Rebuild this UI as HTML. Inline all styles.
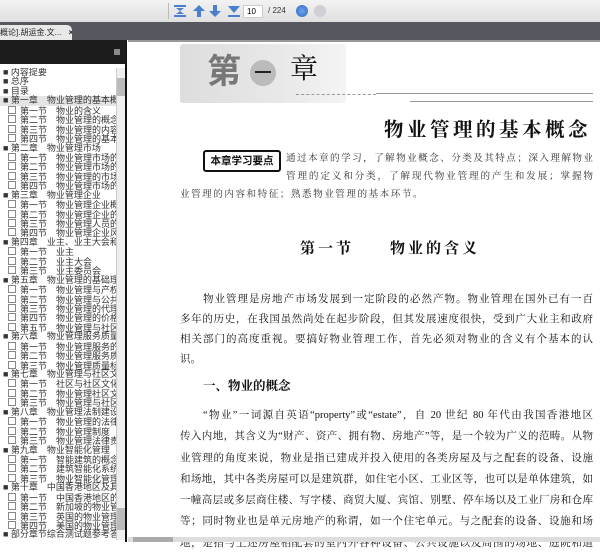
<!DOCTYPE html>
<html><head><meta charset="utf-8"><style>
*{margin:0;padding:0;box-sizing:border-box}
body{width:600px;height:542px;overflow:hidden;background:#fff;position:relative;font-family:"Liberation Serif","Noto Serif CJK SC",serif}
.abs{position:absolute}
#tb{left:0;top:0;width:600px;height:22px;background:linear-gradient(#f2f2f2,#e0e0e0)}
#tabs{left:0;top:22px;width:600px;height:18px;background:#57575f}
#tab{left:0;top:25px;width:72px;height:15px;background:#e8e8e8;border-radius:0 5px 0 0;font:8px "Liberation Sans","Noto Sans CJK SC",sans-serif;color:#222;line-height:15px;white-space:nowrap;overflow:hidden}
#lp{left:0;top:40px;width:127px;height:502px;background:#fff;border-right:2px solid #111}
#lph{left:0;top:40px;width:126px;height:24px;background:#1c1c1c}
#tree{left:0;top:68px;width:116px;font:9px "Liberation Sans","Noto Sans CJK SC",sans-serif;color:#333;line-height:9.45px;white-space:nowrap;overflow:hidden}
#tree div{height:9.45px}
.c{padding-left:3px}
.s{padding-left:8px}
.s:before{content:"";display:inline-block;width:6px;height:6px;border:1px solid #888;margin-right:4px;vertical-align:0}
#sb{left:116px;top:68px;width:9px;height:472px;background:#eee;border-left:1px solid #ccc}
.zh{font-family:"Liberation Serif","Noto Serif CJK SC",serif;color:#111}
p.t{font-size:10.5px;line-height:20px;height:20px;text-align:justify;text-align-last:justify;overflow:hidden}
</style></head><body>
<div id="tb" class="abs"></div>
<div class="abs" style="left:168px;top:3px;width:1px;height:16px;background:#bbb"></div>
<svg class="abs" style="left:172px;top:3px" width="70" height="16" viewBox="0 0 70 16">
<g fill="#4a7fd0"><rect x="2" y="2" width="12" height="2"/><rect x="2" y="12" width="12" height="2"/><path d="M4 5h8l-4 3zM4 11h8l-4-3z"/>
<path d="M27 2l-6 6h4v6h4V8h4z"/><path d="M43 14l-6-6h4V2h4v6h4z"/>
<rect x="56" y="12" width="12" height="2"/><path d="M56 3h12l-6 7z"/></g></svg>
<div class="abs" style="left:243px;top:5px;width:20px;height:13px;background:#fff;border:1px solid #ccc;font:8px 'Liberation Sans',sans-serif;padding-left:3px;line-height:11px">10</div>
<div class="abs" style="left:268px;top:6px;font:8px 'Liberation Sans',sans-serif;color:#333">/ 224</div>
<div class="abs" style="left:296px;top:5px;width:12px;height:12px;border-radius:50%;background:radial-gradient(#6fa2e8,#2f68c4)"></div>
<div class="abs" style="left:314px;top:5px;width:12px;height:12px;border-radius:50%;background:#cfcfd4"></div>
<div id="tabs" class="abs"></div>
<div id="tab" class="abs">概论].胡运金.文... <b style="margin-left:5px">×</b></div>
<div id="lp" class="abs"></div>
<div id="lph" class="abs"><div class="abs" style="left:114px;top:9px;width:6px;height:6px;background:#888"></div></div>
<div id="tree" class="abs">
<div class="c">■ 内容提要</div><div class="c">■ 总序</div><div class="c">■ 目录</div>
<div class="c" style="background:#e4e4e4">■ 第一章　物业管理的基本概念</div>
<div class="s">第一节　物业的含义</div><div class="s">第二节　物业管理的概念</div><div class="s">第三节　物业管理的内容与</div><div class="s">第四节　物业管理的基本环</div>
<div class="c">■ 第二章　物业管理市场</div>
<div class="s">第一节　物业管理市场的概</div><div class="s">第二节　物业管理市场的运</div><div class="s">第三节　物业管理的市场秩</div><div class="s">第四节　物业管理市场的完</div>
<div class="c">■ 第三章　物业管理企业</div>
<div class="s">第一节　物业管理企业概述</div><div class="s">第二节　物业管理企业的设</div><div class="s">第三节　物业管理人员的素</div><div class="s">第四节　物业管理企业风险</div>
<div class="c">■ 第四章　业主、业主大会和业主</div>
<div class="s">第一节　业主</div><div class="s">第二节　业主大会</div><div class="s">第三节　业主委员会</div>
<div class="c">■ 第五章　物业管理的基础理论</div>
<div class="s">第一节　物业管理与产权理</div><div class="s">第二节　物业管理与公共选</div><div class="s">第三节　物业管理的代理理</div><div class="s">第四节　物业管理的价格理</div><div class="s">第五节　物业管理与社区理</div>
<div class="c">■ 第六章　物业管理服务质量</div>
<div class="s">第一节　物业管理服务的概</div><div class="s">第二节　物业管理服务质量</div><div class="s">第三节　物业管理质量标准</div>
<div class="c">■ 第七章　物业管理与社区文化</div>
<div class="s">第一节　社区与社区文化的</div><div class="s">第二节　物业管理社区文化</div><div class="s">第三节　物业管理与社区文</div>
<div class="c">■ 第八章　物业管理法制建设</div>
<div class="s">第一节　物业管理的法律基</div><div class="s">第二节　物业管理制度</div><div class="s">第三节　物业管理法律责任</div>
<div class="c">■ 第九章　物业智能化管理</div>
<div class="s">第一节　智能建筑的概念</div><div class="s">第二节　建筑智能化系统组</div><div class="s">第三节　物业智能化管理</div>
<div class="c">■ 第十章　中国香港地区及其他</div>
<div class="s">第一节　中国香港地区的物</div><div class="s">第二节　新加坡的物业管理</div><div class="s">第三节　英国的物业管理</div><div class="s">第四节　美国的物业管理</div>
<div class="c">■ 部分章节综合测试题参考答案</div>
</div>
<div id="sb" class="abs"><div class="abs" style="left:0;top:10px;width:8px;height:18px;background:#bbb"></div><div class="abs" style="left:0;top:440px;width:8px;height:22px;background:#bbb"></div></div>

<div class="abs" style="left:128px;top:40px;width:472px;height:2px;background:#999"></div>
<div class="abs" style="left:180px;top:44px;width:166px;height:59px;background:linear-gradient(90deg,#ddd,#e8e8e8 60%,#f4f4f4);border-radius:3px"></div>
<div class="abs zh" style="left:207px;top:49px;font-size:34px;font-weight:bold;color:#777;font-family:'Noto Sans CJK SC',sans-serif;line-height:40px">第</div>
<div class="abs" style="left:250px;top:60px;width:26px;height:26px;border-radius:50%;background:#bbb"></div>
<div class="abs" style="left:255px;top:71px;width:16px;height:2px;background:#222"></div>
<div class="abs zh" style="left:290px;top:52px;font-size:28px;line-height:36px">章</div>
<div class="abs" style="left:296px;top:94px;width:80px;border-top:1px dashed #999"></div>
<div class="abs" style="left:376px;top:93px;width:217px;height:1px;background:#999"></div>
<div class="abs" style="left:410px;top:101px;width:183px;height:1px;background:#999"></div>
<div class="abs zh" style="left:384px;top:114px;font-size:19.5px;font-weight:bold;letter-spacing:3.5px;white-space:nowrap">物业管理的基本概念</div>
<div class="abs" style="left:203px;top:150px;width:78px;height:22px;border:2px solid #111;border-radius:3px;font:bold 10.5px 'Noto Sans CJK SC',sans-serif;line-height:18px;text-align:center;color:#111">本章学习要点</div>
<div class="abs zh" style="left:180px;top:150px;width:413px;font-size:9.6px;line-height:18px;color:#333">
<p style="padding-left:106px;text-align:justify;text-align-last:justify">通过本章的学习，了解物业概念、分类及其特点；深入理解物业</p>
<p style="padding-left:106px;text-align:justify;text-align-last:justify">管理的定义和分类，了解现代物业管理的产生和发展；掌握物</p>
<p style="letter-spacing:1.5px">业管理的内容和特征；熟悉物业管理的基本环节。</p></div>
<div class="abs zh" style="left:300px;top:237px;font-size:15px;font-weight:bold;white-space:nowrap;letter-spacing:3px">第一节　　物业的含义</div>
<div class="abs zh" style="left:180px;top:290px;width:413px">
<p class="t" style="padding-left:23px">物业管理是房地产市场发展到一定阶段的必然产物。物业管理在国外已有一百</p>
<p class="t">多年的历史，在我国虽然尚处在起步阶段，但其发展速度很快，受到广大业主和政府</p>
<p class="t">相关部门的高度重视。要搞好物业管理工作，首先必须对物业的含义有个基本的认</p>
<p class="t" style="text-align-last:left">识。</p></div>
<div class="abs zh" style="left:203px;top:376px;font-size:12.5px;font-weight:bold">一、物业的概念</div>
<div class="abs zh" style="left:180px;top:405px;width:413px">
<p class="t" style="padding-left:23px;line-height:21.3px;height:21.3px">“物业”一词源自英语“property”或“estate”，自 20 世纪 80 年代由我国香港地区</p>
<p class="t" style="line-height:21.3px;height:21.3px">传入内地，其含义为“财产、资产、拥有物、房地产”等，是一个较为广义的范畴。从物</p>
<p class="t" style="line-height:21.3px;height:21.3px">业管理的角度来说，物业是指已建成并投入使用的各类房屋及与之配套的设备、设施</p>
<p class="t" style="line-height:21.3px;height:21.3px">和场地，其中各类房屋可以是建筑群，如住宅小区、工业区等，也可以是单体建筑，如</p>
<p class="t" style="line-height:21.3px;height:21.3px">一幢高层或多层商住楼、写字楼、商贸大厦、宾馆、别墅、停车场以及工业厂房和仓库</p>
<p class="t" style="line-height:21.3px;height:21.3px">等；同时物业也是单元房地产的称谓，如一个住宅单元。与之配套的设备、设施和场</p>
<p class="t" style="line-height:21.3px;height:21.3px">地，是指与上述房屋相配套的室内外各种设备、公共设施以及周围的场地、庭院和道</p></div>
<div class="abs" style="left:128px;top:537px;width:472px;height:5px;background:#ddd"></div>
<div class="abs" style="left:133px;top:537px;width:40px;height:5px;background:#aaa"></div>
</body></html>
